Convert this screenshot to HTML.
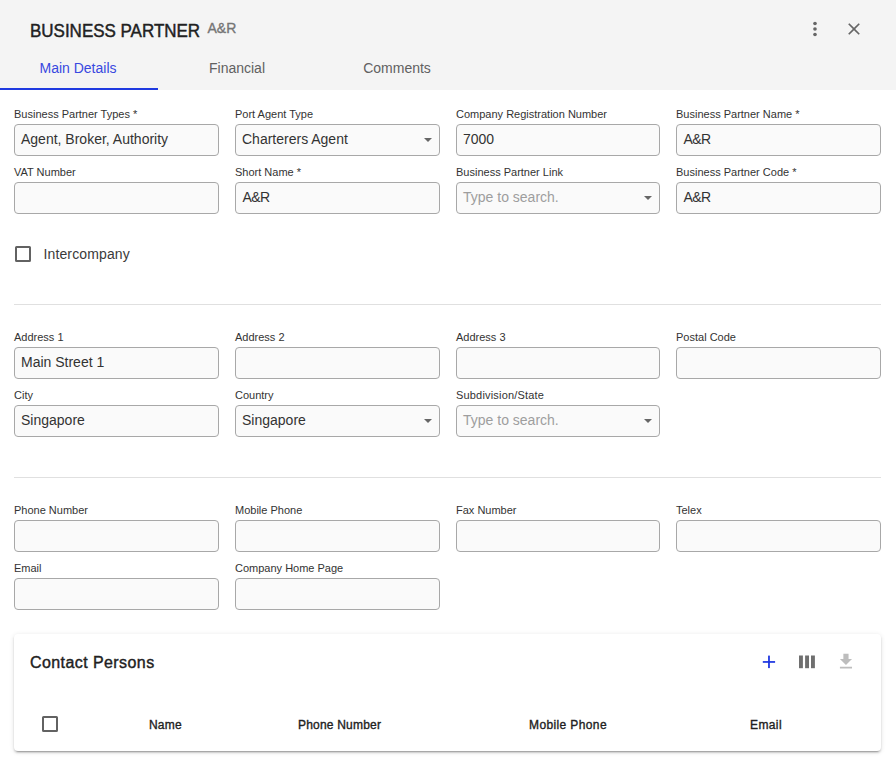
<!DOCTYPE html>
<html><head><meta charset="utf-8">
<style>
*{box-sizing:border-box;margin:0;padding:0}
html,body{width:896px;height:762px;overflow:hidden;background:#fff;font-family:"Liberation Sans",sans-serif;color:#212121}
.hdr{position:absolute;left:0;top:0;width:896px;height:90px;background:#f4f4f4}
.title{position:absolute;left:30px;top:21px;font-size:18px;font-weight:normal;-webkit-text-stroke:0.45px #212121;color:#212121;white-space:nowrap;transform:scaleX(0.943);transform-origin:0 0}
.sub{position:absolute;left:207.5px;top:20px;font-size:14px;font-weight:normal;-webkit-text-stroke:0.35px #757575;color:#757575}
.tab{position:absolute;top:60px;width:158px;text-align:center;font-size:14px;color:#616161}
.tab.act{color:#3848e0}
.ink{position:absolute;left:0;top:88px;width:158px;height:2px;background:#1f3ae0}
.row{position:absolute;left:14px;width:867px;height:46px}
.f{position:absolute;top:0;width:205px}
.lbl{position:absolute;left:0;top:-2px;font-size:11px;color:#333;white-space:nowrap}
.inp{position:absolute;left:0;top:14px;width:100%;height:32px;border:1px solid #a8a8a8;border-radius:4px;background:#fafafa}
.val{position:absolute;left:6px;top:6px;font-size:14px;color:#333;white-space:nowrap}
.ph{color:#9e9e9e}
.arr{position:absolute;right:7.5px;top:13px;width:0;height:0;border-left:4.6px solid transparent;border-right:4.6px solid transparent;border-top:4.6px solid #666}
.div{position:absolute;left:14px;width:867px;height:1px;background:#e0e0e0}
.cb{position:absolute;width:16px;height:16px;border:2px solid #626262;border-radius:1.5px}
.card{position:absolute;left:14px;top:634px;width:867px;height:117px;background:#fff;border-radius:4px;box-shadow:0 3px 1px -2px rgba(0,0,0,.2),0 2px 2px 0 rgba(0,0,0,.14),0 1px 5px 0 rgba(0,0,0,.12)}
.ct{position:absolute;left:16px;top:20px;font-size:16px;font-weight:normal;-webkit-text-stroke:0.4px #212121;color:#212121;white-space:nowrap;letter-spacing:0.42px}
.th{position:absolute;top:84px;font-size:12px;font-weight:normal;-webkit-text-stroke:0.35px #212121;color:#212121;white-space:nowrap;letter-spacing:0.2px}
</style></head><body>
<div class="hdr">
  <div class="title">BUSINESS PARTNER</div>
  <div class="sub">A&amp;R</div>
  <svg style="position:absolute;left:804px;top:18px" width="22" height="22" viewBox="0 0 24 24"><circle cx="12" cy="6" r="2" fill="#666"/><circle cx="12" cy="12" r="2" fill="#666"/><circle cx="12" cy="18" r="2" fill="#666"/></svg>
  <svg style="position:absolute;left:844px;top:19px" width="20" height="20" viewBox="0 0 24 24"><path d="M19 6.41L17.59 5 12 10.59 6.41 5 5 6.41 10.59 12 5 17.59 6.41 19 12 13.41 17.59 19 19 17.59 13.41 12z" fill="#666"/></svg>
  <div class="tab act" style="left:-1px">Main Details</div>
  <div class="tab" style="left:158px">Financial</div>
  <div class="tab" style="left:318px">Comments</div>
  <div class="ink"></div>
</div>

<div class="row" style="top:110px">
  <div class="f" style="left:0"><div class="lbl">Business Partner Types *</div><div class="inp"><div class="val">Agent, Broker, Authority</div></div></div>
  <div class="f" style="left:221px"><div class="lbl">Port Agent Type</div><div class="inp"><div class="val">Charterers Agent</div><div class="arr"></div></div></div>
  <div class="f" style="left:442px;width:204px"><div class="lbl">Company Registration Number</div><div class="inp"><div class="val">7000</div></div></div>
  <div class="f" style="left:662px"><div class="lbl">Business Partner Name *</div><div class="inp"><div class="val" style="letter-spacing:-0.6px;left:6.5px">A&amp;R</div></div></div>
</div>
<div class="row" style="top:168px">
  <div class="f" style="left:0"><div class="lbl">VAT Number</div><div class="inp"></div></div>
  <div class="f" style="left:221px"><div class="lbl">Short Name *</div><div class="inp"><div class="val" style="letter-spacing:-0.6px;left:6.5px">A&amp;R</div></div></div>
  <div class="f" style="left:442px;width:204px"><div class="lbl">Business Partner Link</div><div class="inp"><div class="val ph">Type to search.</div><div class="arr"></div></div></div>
  <div class="f" style="left:662px"><div class="lbl">Business Partner Code *</div><div class="inp"><div class="val" style="letter-spacing:-0.6px;left:6.5px">A&amp;R</div></div></div>
</div>
<div class="cb" style="left:15px;top:246px"></div>
<div style="position:absolute;left:43.5px;top:246px;font-size:14px;color:#3a3a3a;letter-spacing:0.13px">Intercompany</div>
<div class="div" style="top:304px"></div>

<div class="row" style="top:333px">
  <div class="f" style="left:0"><div class="lbl">Address 1</div><div class="inp"><div class="val">Main Street 1</div></div></div>
  <div class="f" style="left:221px"><div class="lbl">Address 2</div><div class="inp"></div></div>
  <div class="f" style="left:442px;width:204px"><div class="lbl">Address 3</div><div class="inp"></div></div>
  <div class="f" style="left:662px"><div class="lbl">Postal Code</div><div class="inp"></div></div>
</div>
<div class="row" style="top:391px">
  <div class="f" style="left:0"><div class="lbl">City</div><div class="inp"><div class="val">Singapore</div></div></div>
  <div class="f" style="left:221px"><div class="lbl">Country</div><div class="inp"><div class="val">Singapore</div><div class="arr"></div></div></div>
  <div class="f" style="left:442px;width:204px"><div class="lbl" style="letter-spacing:0.18px">Subdivision/State</div><div class="inp"><div class="val ph">Type to search.</div><div class="arr"></div></div></div>
</div>
<div class="div" style="top:477px"></div>

<div class="row" style="top:506px">
  <div class="f" style="left:0"><div class="lbl">Phone Number</div><div class="inp"></div></div>
  <div class="f" style="left:221px"><div class="lbl">Mobile Phone</div><div class="inp"></div></div>
  <div class="f" style="left:442px;width:204px"><div class="lbl">Fax Number</div><div class="inp"></div></div>
  <div class="f" style="left:662px"><div class="lbl">Telex</div><div class="inp"></div></div>
</div>
<div class="row" style="top:564px">
  <div class="f" style="left:0"><div class="lbl">Email</div><div class="inp"></div></div>
  <div class="f" style="left:221px"><div class="lbl">Company Home Page</div><div class="inp"></div></div>
</div>

<div class="card">
  <div class="ct">Contact Persons</div>
  <svg style="position:absolute;left:0;top:0" width="867" height="117" viewBox="14 634 867 117">
    <rect x="762.8" y="661.1" width="12.3" height="1.7" fill="#1a33e0"/><rect x="768.1" y="655.6" width="1.75" height="12.5" fill="#1a33e0"/>
    <rect x="799" y="655.5" width="3.9" height="12.7" fill="#6f6f6f"/><rect x="805.1" y="655.5" width="3.9" height="12.7" fill="#6f6f6f"/><rect x="811" y="655.5" width="3.9" height="12.7" fill="#6f6f6f"/>
    <g transform="translate(835.6 651.1) scale(0.864)"><path d="M5 20h14v-2H5v2zM19 9h-4V3H9v6H5l7 7 7-7z" fill="#bdbdbd"/></g>
  </svg>
  <div class="cb" style="left:28px;top:82px"></div>
  <div class="th" style="left:135px">Name</div>
  <div class="th" style="left:284px">Phone Number</div>
  <div class="th" style="left:515px;letter-spacing:0.38px">Mobile Phone</div>
  <div class="th" style="left:736px;letter-spacing:0.4px">Email</div>
</div>
</body></html>
